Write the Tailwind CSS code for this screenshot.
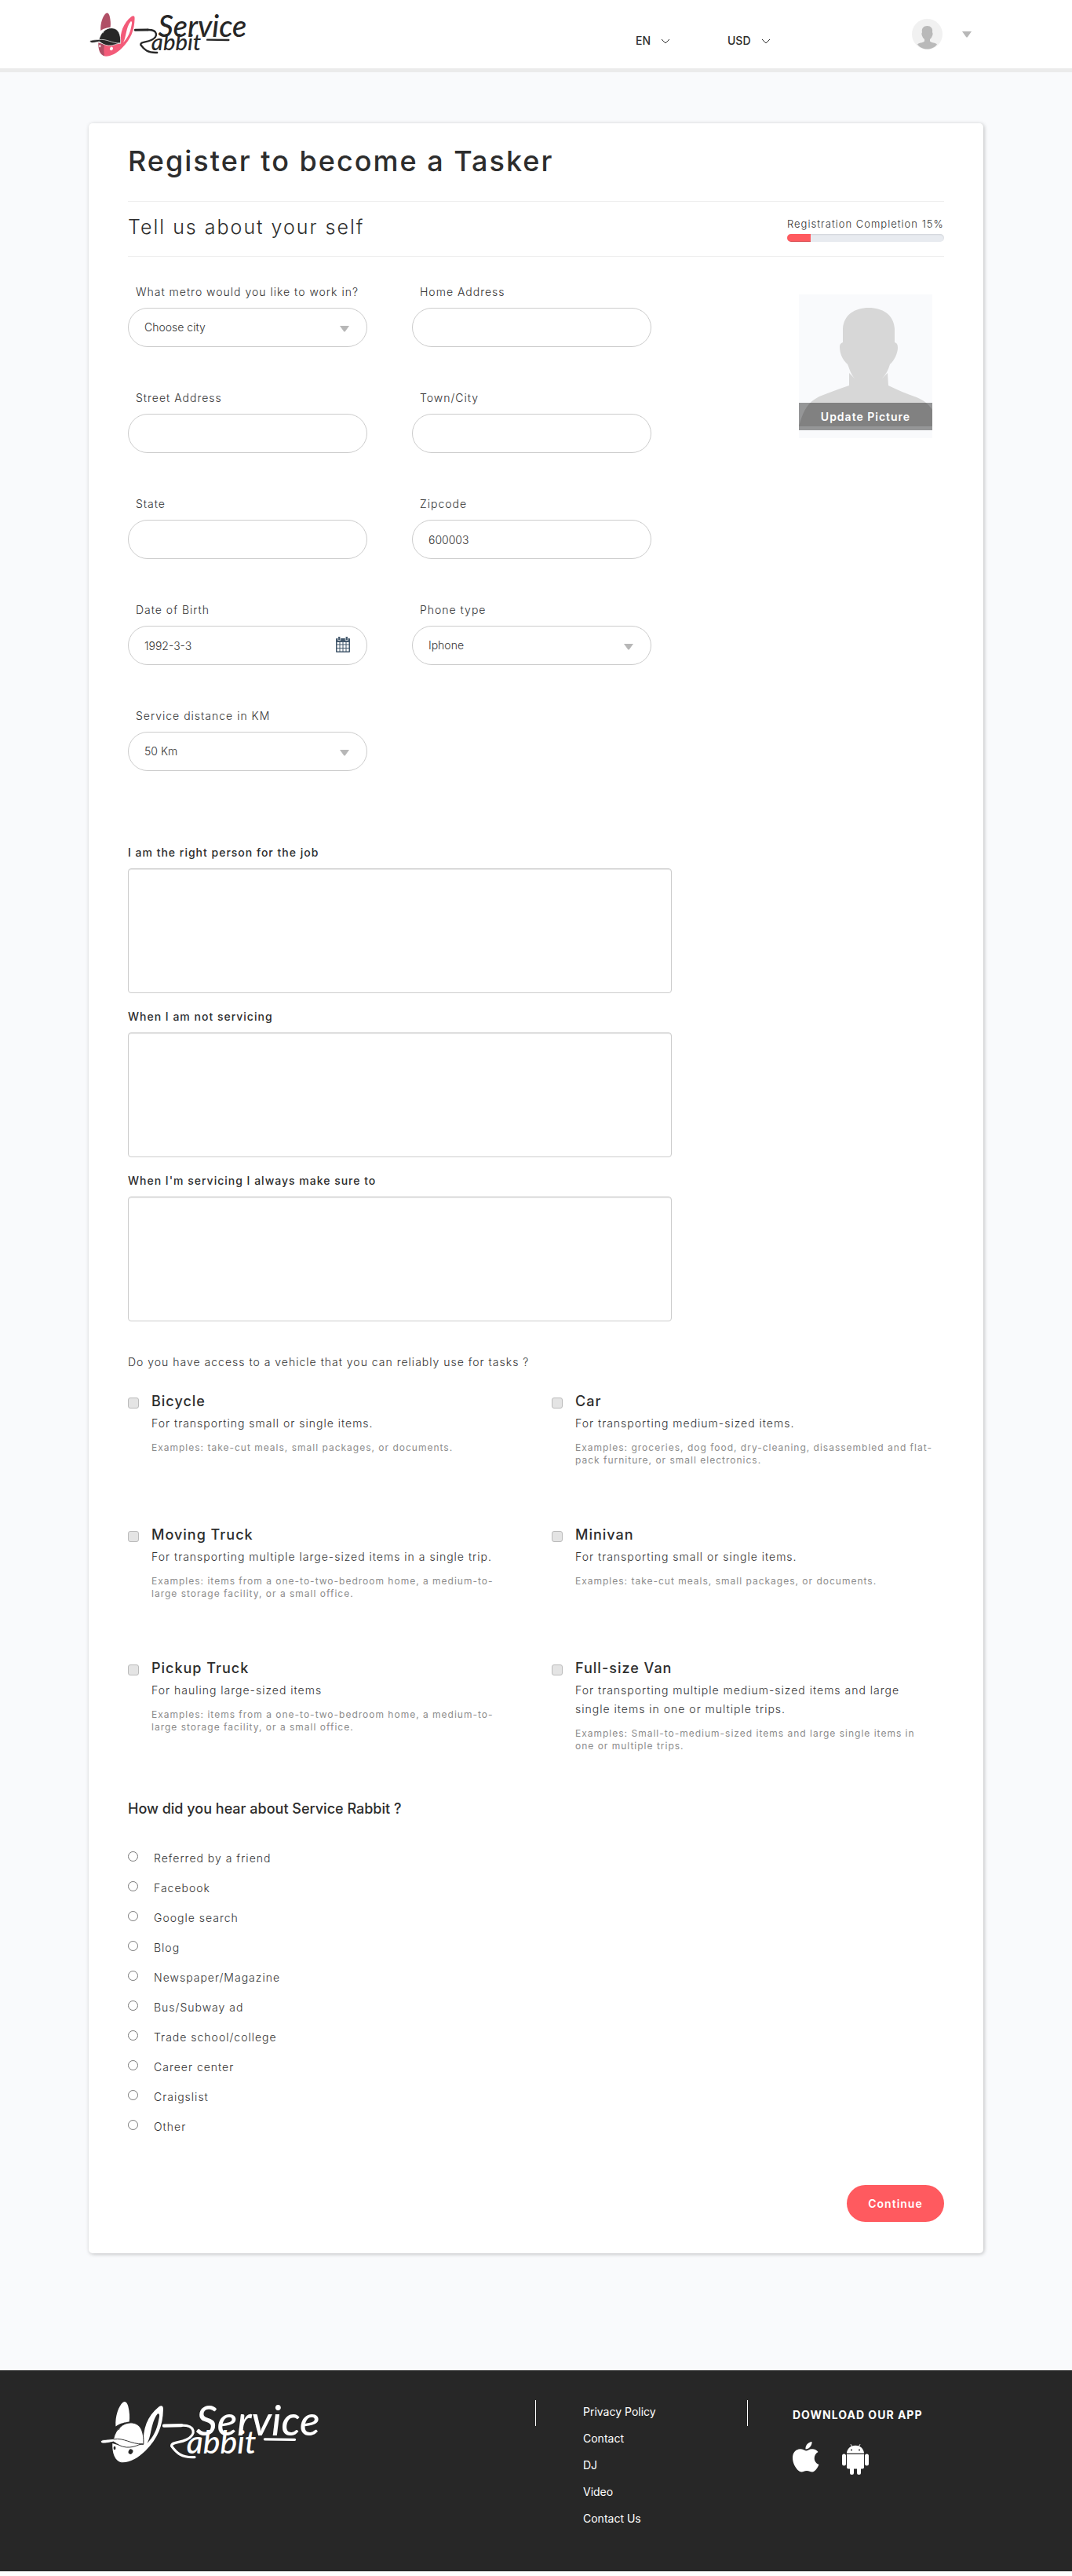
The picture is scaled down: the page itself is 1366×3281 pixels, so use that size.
<!DOCTYPE html>
<html lang="en">
<head>
<meta charset="utf-8">
<meta name="viewport" content="width=device-width, initial-scale=1">
<title>Service Rabbit - Register to become a Tasker</title>
<script src="https://cdn.jsdelivr.net/npm/@tailwindcss/browser@4"></script>
</head>
<body class="bg-white font-['Inter',sans-serif] text-sm text-[#2d2d2d]">

<!-- Shared symbols -->
<svg class="hidden" aria-hidden="true">
  <symbol id="logo" viewBox="36 42 610 174">
    <path fill="var(--ear)" d="M82 114C80 86 90 58 102 48C108 43 113 48 116 58C120 74 121 90 119 101C108 103 95 104 82 114Z"/>
    <path fill="var(--ear)" d="M73 160C72 188 80 208 97 212L100 168Z"/>
    <path fill="var(--face)" d="M96 168L158 163C156 120 168 86 200 60C207 55 213 57 212 68C211 112 198 146 164 180C142 202 118 214 97 212C93 196 94 182 96 168Z"/>
    <path fill="var(--line)" d="M168 160C180 142 178 102 197 79C203 78 202 86 200 94C195 124 184 144 168 160Z"/>
    <ellipse cx="123" cy="183" rx="6" ry="7" fill="var(--line)" transform="rotate(25 123 183)"/>
    <ellipse cx="79" cy="173" rx="3" ry="5" fill="var(--line)"/>
    <path fill="var(--cap)" stroke="var(--line)" stroke-width="2" d="M41 156C41 150 48 151 76 148C82 122 100 104 124 104C150 105 160 128 158 163C146 160 138 172 112 171C96 170 88 163 76 156C62 159 42 164 41 156Z"/>
    <path fill="none" stroke="var(--line)" stroke-width="2" d="M76 149C106 144 122 163 157 162M90 124C94 112 103 108 108 106"/>
    <path fill="none" stroke="var(--cap)" stroke-width="9" stroke-linecap="round" d="M214 112L262 111"/>
    <path fill="none" stroke="var(--cap)" stroke-width="7" stroke-linecap="round" d="M262 111C300 110 304 136 276 150C256 160 234 156 235 168C248 186 262 200 298 198"/>
    <path fill="none" stroke="var(--cap)" stroke-width="7" stroke-linecap="round" d="M490 149L572 150"/>
    <text x="302" y="138" font-size="114" font-weight="500" font-style="italic" font-family="Lato, sans-serif" fill="var(--cap)">Service</text>
    <text x="276" y="188" font-size="88" font-weight="500" font-style="italic" font-family="Lato, sans-serif" fill="var(--cap)">abbit</text>
  </symbol>
  <symbol id="caret" viewBox="0 0 12 8"><path fill="#b7b7b7" d="M0 0H12L7 7Q6 8 5 7Z"/></symbol>
  <symbol id="chevron" viewBox="0 0 12 7"><path fill="none" stroke="#333" d="M1 1L6 6L11 1"/></symbol>
</svg>

<header class="relative bg-white shadow-[0_5px_0_#ebebeb]">
  <div class="mx-auto flex h-[87px] max-w-[1140px] items-center pr-[15px]">
    <a href="#" aria-label="Service Rabbit"><svg class="block h-[58px] w-[203px] [--cap:#272727] [--ear:#b04f66] [--face:#f35b79] [--line:#fff]"><use href="#logo"/></svg></a>
    <nav class="ml-auto flex items-center" aria-label="Account">
      <div class="relative mt-4 mr-[73px]">
        <select aria-label="Language" class="block h-5 w-[44px] appearance-none bg-transparent text-sm font-medium"><option>EN</option></select>
        <svg class="pointer-events-none absolute top-[7px] right-0 h-[7px] w-3" aria-hidden="true"><use href="#chevron"/></svg>
      </div>
      <div class="relative mt-4 mr-[180px]">
        <select aria-label="Currency" class="block h-5 w-[55px] appearance-none bg-transparent text-sm font-medium"><option>USD</option></select>
        <svg class="pointer-events-none absolute top-[7px] right-0 h-[7px] w-3" aria-hidden="true"><use href="#chevron"/></svg>
      </div>
      <button type="button" aria-label="Account menu" class="flex items-center gap-[25px]">
        <svg class="size-[39px]" viewBox="0 0 39 39"><circle cx="19.5" cy="19.5" r="19.5" fill="#f1f1f1"/><path fill="#b9b9b9" d="M7 32.500C9 30 14 31 16 28.500V26C14 24.500 13 22 12.500 20C12 18 13 18 13 17C12 12 15 9 19.500 9S27 12 26 17C26 18 27 18 26.500 20C26 22 25 24.500 23 26V28.500C25 31 30 30 32 32.500C29 36.500 24 38.500 19.500 38.500S10 36.500 7 32.500Z"/></svg>
        <svg class="h-2 w-3" aria-hidden="true"><use href="#caret"/></svg>
      </button>
    </nav>
  </div>
</header>

<main class="bg-[#f9fafc] pt-[70px] pb-[149px]">
  <form class="mx-auto max-w-[1140px] rounded-[5px] bg-white px-[50px] pb-10 shadow-[1px_1px_5px_rgba(0,0,0,0.25)]">
    <h1 class="border-b border-[#eee] pt-7 pb-[31px] text-[36px] leading-10 font-medium tracking-[2px]">Register to become a Tasker</h1>

    <div class="flex items-start justify-between border-b border-[#eee] pt-4 pb-[18px]">
      <h2 class="text-[25px] leading-8 font-light tracking-[2px]">Tell us about your self</h2>
      <div class="w-[200px] pt-1">
        <p id="progress-label" class="text-[13px] leading-4 font-light tracking-[1px] whitespace-nowrap text-[#333]">Registration Completion 15%</p>
        <div role="progressbar" aria-labelledby="progress-label" aria-valuenow="15" aria-valuemin="0" aria-valuemax="100" class="mt-[5px] h-2.5 overflow-hidden rounded-full bg-[#e8ebf0] shadow-[inset_0_1px_2px_rgba(0,0,0,0.1)]">
          <div class="h-full bg-[#ff5a5f] shadow-[inset_0_-1px_0_rgba(0,0,0,0.15)]" style="width:15%"></div>
        </div>
      </div>
    </div>

    <div class="flex items-start justify-between pt-[35px] pr-[15px]">
      <div class="grid w-[667px] grid-cols-2 gap-x-[57px] gap-y-[55px] font-light text-[#333]">
        <div>
          <label for="metro" class="block pl-2.5 leading-5 tracking-[1px] whitespace-nowrap">What metro would you like to work in?</label>
          <div class="relative mt-2.5">
            <select id="metro" class="block h-[50px] w-full appearance-none rounded-full border border-[#ccc] bg-white px-5"><option>Choose city</option></select>
            <svg class="pointer-events-none absolute top-[23px] right-[23px] h-2 w-3" aria-hidden="true"><use href="#caret"/></svg>
          </div>
        </div>
        <div>
          <label for="home" class="block pl-2.5 leading-5 tracking-[1px]">Home Address</label>
          <input id="home" type="text" class="mt-2.5 block h-[50px] w-full rounded-full border border-[#ccc] bg-white px-5">
        </div>
        <div>
          <label for="street" class="block pl-2.5 leading-5 tracking-[1px]">Street Address</label>
          <input id="street" type="text" class="mt-2.5 block h-[50px] w-full rounded-full border border-[#ccc] bg-white px-5">
        </div>
        <div>
          <label for="town" class="block pl-2.5 leading-5 tracking-[1px]">Town/City</label>
          <input id="town" type="text" class="mt-2.5 block h-[50px] w-full rounded-full border border-[#ccc] bg-white px-5">
        </div>
        <div>
          <label for="state" class="block pl-2.5 leading-5 tracking-[1px]">State</label>
          <input id="state" type="text" class="mt-2.5 block h-[50px] w-full rounded-full border border-[#ccc] bg-white px-5">
        </div>
        <div>
          <label for="zip" class="block pl-2.5 leading-5 tracking-[1px]">Zipcode</label>
          <input id="zip" type="text" value="600003" class="mt-2.5 block h-[50px] w-full rounded-full border border-[#ccc] bg-white px-5">
        </div>
        <div>
          <label for="dob" class="block pl-2.5 leading-5 tracking-[1px]">Date of Birth</label>
          <div class="relative mt-2.5">
            <input id="dob" type="text" value="1992-3-3" class="block h-[50px] w-full rounded-full border border-[#ccc] bg-white px-5">
            <svg class="pointer-events-none absolute top-3.5 right-[22px] h-5 w-[18px]" viewBox="0 0 18 20" aria-hidden="true"><path fill="#43586c" fill-rule="evenodd" d="M3 0H5.500V2H12.500V0H15V2H17Q18 2 18 3V19Q18 20 17 20H1Q0 20 0 19V3Q0 2 1 2H3ZM1.500 7V9.500H4.500V7ZM5.500 7V9.500H8.500V7ZM9.500 7V9.500H12.500V7ZM13.500 7V9.500H16.500V7ZM1.500 10.500V14H4.500V10.500ZM5.500 10.500V14H8.500V10.500ZM9.500 10.500V14H12.500V10.500ZM13.500 10.500V14H16.500V10.500ZM1.500 15V18.500H4.500V15ZM5.500 15V18.500H8.500V15ZM9.500 15V18.500H12.500V15ZM13.500 15V18.500H16.500V15Z"/><path stroke="#fff" stroke-width=".7" fill="none" d="M2.700 1V4.500H5.800V1M12.200 1V4.500H15.300V1"/></svg>
          </div>
        </div>
        <div>
          <label for="phone" class="block pl-2.5 leading-5 tracking-[1px]">Phone type</label>
          <div class="relative mt-2.5">
            <select id="phone" class="block h-[50px] w-full appearance-none rounded-full border border-[#ccc] bg-white px-5"><option>Iphone</option></select>
            <svg class="pointer-events-none absolute top-[23px] right-[23px] h-2 w-3" aria-hidden="true"><use href="#caret"/></svg>
          </div>
        </div>
        <div>
          <label for="distance" class="block pl-2.5 leading-5 tracking-[1px]">Service distance in KM</label>
          <div class="relative mt-2.5">
            <select id="distance" class="block h-[50px] w-full appearance-none rounded-full border border-[#ccc] bg-white px-5"><option>50 Km</option></select>
            <svg class="pointer-events-none absolute top-[23px] right-[23px] h-2 w-3" aria-hidden="true"><use href="#caret"/></svg>
          </div>
        </div>
      </div>

      <div class="relative mt-[13px] h-[183px] w-[170px] bg-[#f9fafc]">
        <svg class="block h-[170px] w-[170px]" viewBox="0 0 170 170" aria-hidden="true"><path fill="#d7d7d7" d="M0 168C5 150 10 138 26 130C38 125 50 121 64 116V100L71 107C66 101 65 96 62 89C55 83 52 74 52 67C52 63 54 62 56 61V44C57 26 71 17 89 17S121 26 122 44V61C125 62 126 64 126 68C126 74 122 84 116 89C114 96 111 102 106 107L113 100L114 116C126 122 138 127 150 131C160 135 166 141 170 147V168Z"/></svg>
        <button type="button" class="absolute inset-x-0 bottom-2.5 h-[35px] bg-black/40 font-semibold tracking-[1px] text-white">Update Picture</button>
      </div>
    </div>

    <div class="flex w-2/3 flex-col gap-5 pt-[94px]">
      <div>
        <label for="about1" class="block leading-5 font-medium tracking-[1px]">I am the right person for the job</label>
        <textarea id="about1" class="mt-2.5 block h-[159px] w-full resize-none rounded border border-[#ccc] p-3 shadow-[inset_0_1px_1px_rgba(0,0,0,0.1)]"></textarea>
      </div>
      <div>
        <label for="about2" class="block leading-5 font-medium tracking-[1px]">When I am not servicing</label>
        <textarea id="about2" class="mt-2.5 block h-[159px] w-full resize-none rounded border border-[#ccc] p-3 shadow-[inset_0_1px_1px_rgba(0,0,0,0.1)]"></textarea>
      </div>
      <div>
        <label for="about3" class="block leading-5 font-medium tracking-[1px]">When I'm servicing I always make sure to</label>
        <textarea id="about3" class="mt-2.5 block h-[159px] w-full resize-none rounded border border-[#ccc] p-3 shadow-[inset_0_1px_1px_rgba(0,0,0,0.1)]"></textarea>
      </div>
    </div>

    <fieldset class="pt-[42px]">
      <legend class="contents"><span class="block leading-5 font-light tracking-[1px] text-[#333]">Do you have access to a vehicle that you can reliably use for tasks ?</span></legend>
      <div class="grid grid-cols-2 gap-x-10 gap-y-[75px] pt-7 tracking-[1px]">
        <div class="flex gap-4">
          <input id="bicycle" type="checkbox" class="mt-[7px] size-3.5 shrink-0 appearance-none rounded-[3px] border border-[#bbb] bg-[#e4e4e4] checked:bg-[#ff5a5f]">
          <div>
            <label for="bicycle" class="block text-lg leading-6 font-medium">Bicycle</label>
            <p class="mt-1 leading-6 font-light text-[#333]">For transporting small or single items.</p>
            <p class="mt-[11px] text-xs leading-4 text-[#8c8c8c]">Examples: take-cut meals, small packages, or documents.</p>
          </div>
        </div>
        <div class="flex gap-4">
          <input id="car" type="checkbox" class="mt-[7px] size-3.5 shrink-0 appearance-none rounded-[3px] border border-[#bbb] bg-[#e4e4e4] checked:bg-[#ff5a5f]">
          <div>
            <label for="car" class="block text-lg leading-6 font-medium">Car</label>
            <p class="mt-1 leading-6 font-light text-[#333]">For transporting medium-sized items.</p>
            <p class="mt-[11px] text-xs leading-4 text-[#8c8c8c]">Examples: groceries, dog food, dry-cleaning, disassembled and flat-<br>pack furniture, or small electronics.</p>
          </div>
        </div>
        <div class="flex gap-4">
          <input id="truck" type="checkbox" class="mt-[7px] size-3.5 shrink-0 appearance-none rounded-[3px] border border-[#bbb] bg-[#e4e4e4] checked:bg-[#ff5a5f]">
          <div>
            <label for="truck" class="block text-lg leading-6 font-medium">Moving Truck</label>
            <p class="mt-1 leading-6 font-light text-[#333]">For transporting multiple large-sized items in a single trip.</p>
            <p class="mt-[11px] text-xs leading-4 text-[#8c8c8c]">Examples: items from a one-to-two-bedroom home, a medium-to-<br>large storage facility, or a small office.</p>
          </div>
        </div>
        <div class="flex gap-4">
          <input id="minivan" type="checkbox" class="mt-[7px] size-3.5 shrink-0 appearance-none rounded-[3px] border border-[#bbb] bg-[#e4e4e4] checked:bg-[#ff5a5f]">
          <div>
            <label for="minivan" class="block text-lg leading-6 font-medium">Minivan</label>
            <p class="mt-1 leading-6 font-light text-[#333]">For transporting small or single items.</p>
            <p class="mt-[11px] text-xs leading-4 text-[#8c8c8c]">Examples: take-cut meals, small packages, or documents.</p>
          </div>
        </div>
        <div class="flex gap-4">
          <input id="pickup" type="checkbox" class="mt-[7px] size-3.5 shrink-0 appearance-none rounded-[3px] border border-[#bbb] bg-[#e4e4e4] checked:bg-[#ff5a5f]">
          <div>
            <label for="pickup" class="block text-lg leading-6 font-medium">Pickup Truck</label>
            <p class="mt-1 leading-6 font-light text-[#333]">For hauling large-sized items</p>
            <p class="mt-[11px] text-xs leading-4 text-[#8c8c8c]">Examples: items from a one-to-two-bedroom home, a medium-to-<br>large storage facility, or a small office.</p>
          </div>
        </div>
        <div class="flex gap-4">
          <input id="van" type="checkbox" class="mt-[7px] size-3.5 shrink-0 appearance-none rounded-[3px] border border-[#bbb] bg-[#e4e4e4] checked:bg-[#ff5a5f]">
          <div>
            <label for="van" class="block text-lg leading-6 font-medium">Full-size Van</label>
            <p class="mt-1 leading-6 font-light text-[#333]">For transporting multiple medium-sized items and large<br>single items in one or multiple trips.</p>
            <p class="mt-[11px] text-xs leading-4 text-[#8c8c8c]">Examples: Small-to-medium-sized items and large single items in<br>one or multiple trips.</p>
          </div>
        </div>
      </div>
    </fieldset>

    <fieldset class="pt-[60px]">
      <legend class="contents"><span class="block text-lg leading-6 font-medium">How did you hear about Service Rabbit ?</span></legend>
      <div class="flex flex-col items-start gap-[18px] pt-[41px] leading-5 font-light tracking-[1px] text-[#333]">
        <label class="flex gap-5"><input type="radio" name="source" class="mt-px size-[13px]">Referred by a friend</label>
        <label class="flex gap-5"><input type="radio" name="source" class="mt-px size-[13px]">Facebook</label>
        <label class="flex gap-5"><input type="radio" name="source" class="mt-px size-[13px]">Google search</label>
        <label class="flex gap-5"><input type="radio" name="source" class="mt-px size-[13px]">Blog</label>
        <label class="flex gap-5"><input type="radio" name="source" class="mt-px size-[13px]">Newspaper/Magazine</label>
        <label class="flex gap-5"><input type="radio" name="source" class="mt-px size-[13px]">Bus/Subway ad</label>
        <label class="flex gap-5"><input type="radio" name="source" class="mt-px size-[13px]">Trade school/college</label>
        <label class="flex gap-5"><input type="radio" name="source" class="mt-px size-[13px]">Career center</label>
        <label class="flex gap-5"><input type="radio" name="source" class="mt-px size-[13px]">Craigslist</label>
        <label class="flex gap-5"><input type="radio" name="source" class="mt-px size-[13px]">Other</label>
      </div>
    </fieldset>

    <div class="flex justify-end pt-16">
      <button type="submit" class="h-[47px] w-[124px] rounded-full bg-[#ff5a5f] font-semibold tracking-[1px] text-white">Continue</button>
    </div>
  </form>
</main>

<footer class="mb-[6px] bg-[#272727] text-white">
  <div class="mx-auto flex h-64 max-w-[1140px] items-start pt-[38px]">
    <a href="#" aria-label="Service Rabbit" class="ml-[13px] block w-[556px]"><svg class="block h-[81px] w-[284px] [--cap:#fff] [--ear:#fff] [--face:#fff] [--line:#272727]"><use href="#logo"/></svg></a>
    <div class="h-[33px] w-px bg-white"></div>
    <nav class="flex w-[269px] flex-col items-start gap-3.5 pt-[5px] pl-[60px] leading-5" aria-label="Footer">
      <a href="#">Privacy Policy</a>
      <a href="#">Contact</a>
      <a href="#">DJ</a>
      <a href="#">Video</a>
      <a href="#">Contact Us</a>
    </nav>
    <div class="h-[33px] w-px bg-white"></div>
    <section class="pt-[9px] pl-[57px]">
      <h2 class="leading-5 font-bold tracking-[1px]">DOWNLOAD OUR APP</h2>
      <div class="flex gap-[29px] pt-6">
        <a href="#" aria-label="App Store"><svg class="block h-[39px] w-[34px]" viewBox="0 0 34 39" fill="#fff"><path d="M16.500 9.500C16 4.500 20 .5 24.500 0C25 5 21 9.500 16.500 9.500ZM17 11.500C19 11.500 21 9.200 25 9.200C28 9.200 31 10.800 32.500 13C25.500 17 26.500 26.500 33.500 29C32 33 28.500 38.500 25 38.500C22.500 38.500 21 37 18 37S13.500 38.500 11.500 38.500C6.500 38.500 0 29 0 20.500C0 13 5 9.300 9.500 9.300C13 9.300 15.500 11.500 17 11.500Z"/></svg></a>
        <a href="#" aria-label="Google Play"><svg class="mt-[3px] block h-[39px] w-[34px]" viewBox="0 0 34 39" fill="#fff"><path d="M6 11.800C6 8 8.500 4.500 12 2.800L10.500.3L11.200 0L12.900 2.500Q17 1.200 21.100 2.500L22.800 0L23.500.3L22 2.800C25.500 4.500 28 8 28 11.800ZM6 13H28V29.500Q28 31.500 26 31.500H24V36.500Q24 39 21.500 39T19 36.500V31.500H15V36.500Q15 39 12.500 39T10 36.500V31.500H8Q6 31.500 6 29.500Z"/><rect y="12.500" width="5" height="15" rx="2.500"/><rect x="29" y="12.500" width="5" height="15" rx="2.500"/><circle cx="12" cy="7.500" r="1" fill="#272727"/><circle cx="22" cy="7.500" r="1" fill="#272727"/></svg></a>
      </div>
    </section>
  </div>
</footer>
</body>
</html>
